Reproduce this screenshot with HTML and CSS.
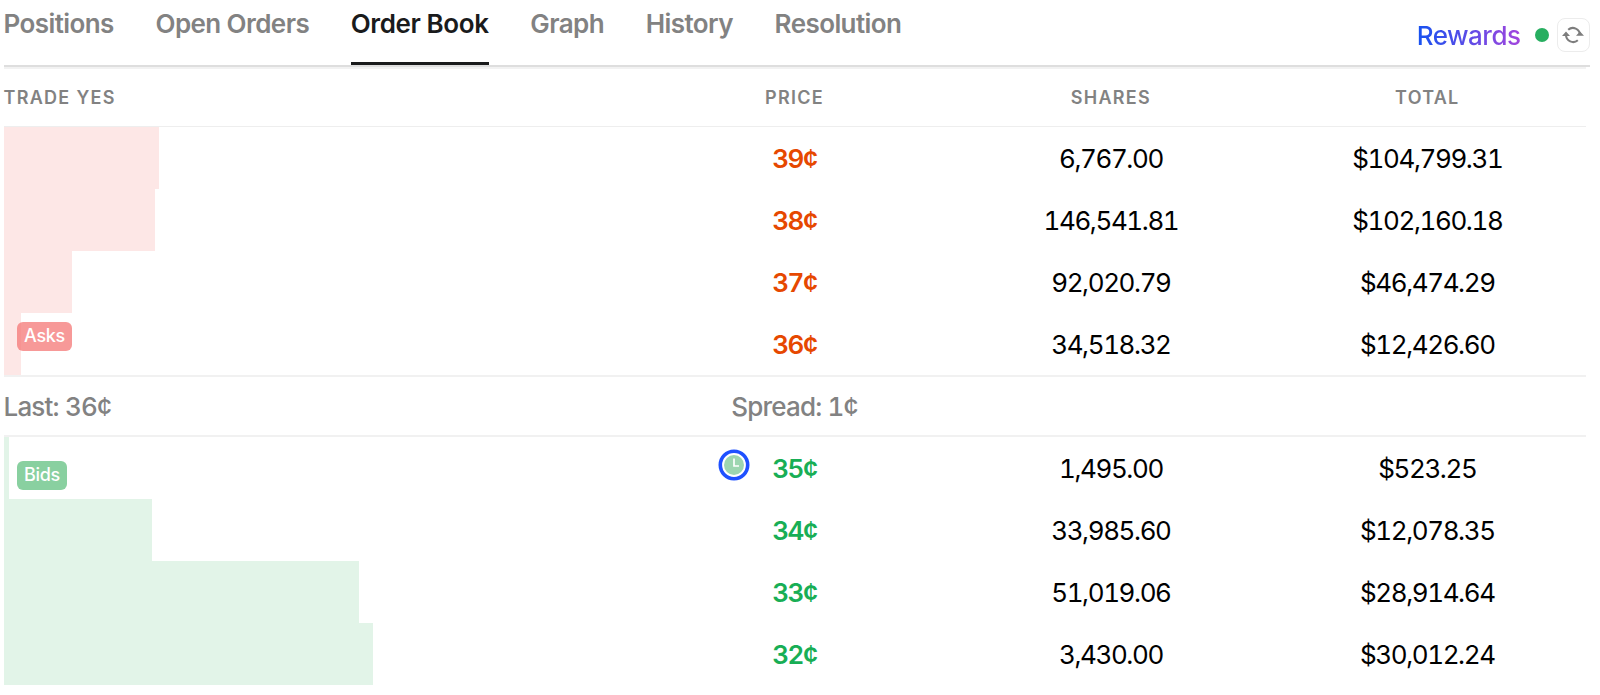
FILE: index.html
```html
<!DOCTYPE html>
<html lang="en">
<head>
    <meta charset="UTF-8">
    <meta name="viewport" content="width=device-width, initial-scale=1.0">
    <title>Order Book</title>
    <link rel="stylesheet" href="styles.css">
</head>
<body>
    <div class="panel">
        <div class="topbar">
            <nav class="tabs">
                <a class="tab">Positions</a>
                <a class="tab">Open Orders</a>
                <a class="tab active">Order Book</a>
                <a class="tab">Graph</a>
                <a class="tab">History</a>
                <a class="tab">Resolution</a>
            </nav>
            <div class="actions">
                <span class="rewards">Rewards</span>
                <span class="live-dot"></span>
                <button class="refresh" aria-label="Refresh">
                    <svg width="22" height="18" viewBox="0 0 22 18">
                        <path d="M6.2 3.8A7.1 7.1 0 0 1 18 9M15.8 14.2A7.1 7.1 0 0 1 4 9" fill="none" stroke="#7d7d7d" stroke-width="2.1"/>
                        <path d="M0 10L4 5.4L8 10ZM14 9.8L18 5.4L22 9.8Z" fill="#7d7d7d"/>
                    </svg>
                </button>
            </div>
        </div>

        <div class="book">
            <div class="row head">
                <div class="first">Trade Yes</div>
                <div>Price</div>
                <div>Shares</div>
                <div>Total</div>
            </div>

            <div class="side asks">
                <div class="row">
                    <div class="depth"><div class="bar" style="width: 155px"></div></div>
                    <div class="price">39¢</div>
                    <div>6,767.00</div>
                    <div>$104,799.31</div>
                </div>
                <div class="row">
                    <div class="depth"><div class="bar" style="width: 151px"></div></div>
                    <div class="price">38¢</div>
                    <div>146,541.81</div>
                    <div>$102,160.18</div>
                </div>
                <div class="row">
                    <div class="depth"><div class="bar" style="width: 68px"></div></div>
                    <div class="price">37¢</div>
                    <div>92,020.79</div>
                    <div>$46,474.29</div>
                </div>
                <div class="row">
                    <div class="depth"><div class="bar" style="width: 17.3px"></div></div>
                    <div class="price">36¢</div>
                    <div>34,518.32</div>
                    <div>$12,426.60</div>
                </div>
                <span class="badge">Asks</span>
            </div>

            <div class="row spread">
                <div class="first">Last: 36¢</div>
                <div>Spread: 1¢</div>
            </div>

            <div class="side bids">
                <div class="row">
                    <div class="depth"><div class="bar" style="width: 5.6px"></div></div>
                    <div class="price">
                        <svg class="clock" width="32" height="32" viewBox="0 0 32 32">
                            <circle cx="16" cy="16" r="13.7" fill="#fff" stroke="#1f51ff" stroke-width="3.6"/>
                            <circle cx="16" cy="16" r="10" fill="#9dd6b0"/>
                            <path d="M16 9.6V17H21" fill="none" stroke="#fff" stroke-width="1.7"/>
                        </svg>
                        35¢
                    </div>
                    <div>1,495.00</div>
                    <div>$523.25</div>
                </div>
                <div class="row">
                    <div class="depth"><div class="bar" style="width: 148px"></div></div>
                    <div class="price">34¢</div>
                    <div>33,985.60</div>
                    <div>$12,078.35</div>
                </div>
                <div class="row">
                    <div class="depth"><div class="bar" style="width: 355.2px"></div></div>
                    <div class="price">33¢</div>
                    <div>51,019.06</div>
                    <div>$28,914.64</div>
                </div>
                <div class="row">
                    <div class="depth"><div class="bar" style="width: 369px"></div></div>
                    <div class="price">32¢</div>
                    <div>3,430.00</div>
                    <div>$30,012.24</div>
                </div>
                <span class="badge">Bids</span>
            </div>
        </div>
    </div>
</body>
</html>
```

FILE: styles.css
```css
* {
    box-sizing: border-box;
}
body {
    margin: 0;
    background: #fff;
    color: #000;
    font-family: Inter, "Liberation Sans", sans-serif;
    font-size: 26px;
    overflow: hidden;
}
.panel {
    width: 1586px;
    margin-left: 3.5px;
}
.topbar {
    display: flex;
    justify-content: space-between;
    height: 67px;
    border-bottom: 2px solid #dedede;
}
.tabs {
    display: flex;
    gap: 41.7px;
}
.tab {
    height: 65px;
    line-height: 48px;
    color: #828282;
    font-weight: 600;
    letter-spacing: -0.58px;
    white-space: nowrap;
}
.tab.active {
    color: #1a1b1c;
    letter-spacing: -0.4px;
    border-bottom: 3px solid #1a1b1c;
}
.actions {
    display: flex;
    align-items: center;
    padding-top: 5px;
}
.rewards {
    font-weight: 500;
    letter-spacing: -0.5px;
    background: linear-gradient(90deg, #1652f0, #a345dd);
    -webkit-background-clip: text;
    background-clip: text;
    color: transparent;
}
.live-dot {
    width: 14px;
    height: 14px;
    margin: 0 8px 0 14px;
    border-radius: 50%;
    background: #27ae60;
}
.refresh {
    display: flex;
    align-items: center;
    justify-content: center;
    width: 33px;
    height: 34px;
    padding: 0 1px 0 0;
    border: 1.5px solid #ececec;
    border-radius: 8px;
    background: #fff;
}
.book {
    width: 1582px;
    border-top: 2px solid #f2f2f2;
}
.row {
    display: grid;
    grid-template-columns: 2fr 1fr 1fr 1fr;
    align-items: center;
    height: 62px;
    text-align: center;
    letter-spacing: -1.4px;
    font-variant-numeric: tabular-nums;
}
.head {
    height: 58px;
    padding-bottom: 1px;
    color: #828282;
    font-size: 18px;
    font-weight: 600;
    letter-spacing: 1.25px;
    text-transform: uppercase;
    border-bottom: 1px solid #eee;
}
.first {
    text-align: left;
}
.side {
    position: relative;
}
.depth,
.bar {
    height: 62px;
}
.price {
    position: relative;
    font-weight: 600;
}
.asks .price {
    color: #e64800;
}
.bids .price {
    color: #18ae55;
}
.asks .bar {
    background: #fde7e6;
}
.bids .bar {
    background: #e2f4e8;
}
.badge {
    position: absolute;
    left: 13.5px;
    height: 29px;
    padding: 0 7px;
    border-radius: 6px;
    color: #fff;
    font-size: 18px;
    font-weight: 500;
    letter-spacing: -0.3px;
    line-height: 28px;
}
.asks .badge {
    bottom: 24px;
    background: rgba(244, 119, 117, 0.75);
}
.bids .badge {
    top: 24px;
    background: #89d0a0;
}
.spread {
    height: 62px;
    color: #828282;
    font-weight: 500;
    letter-spacing: -0.8px;
    border-top: 2px solid #f1f1f1;
    border-bottom: 2px solid #f1f1f1;
}
.clock {
    position: absolute;
    left: 82px;
    top: -3.5px;
}
```
